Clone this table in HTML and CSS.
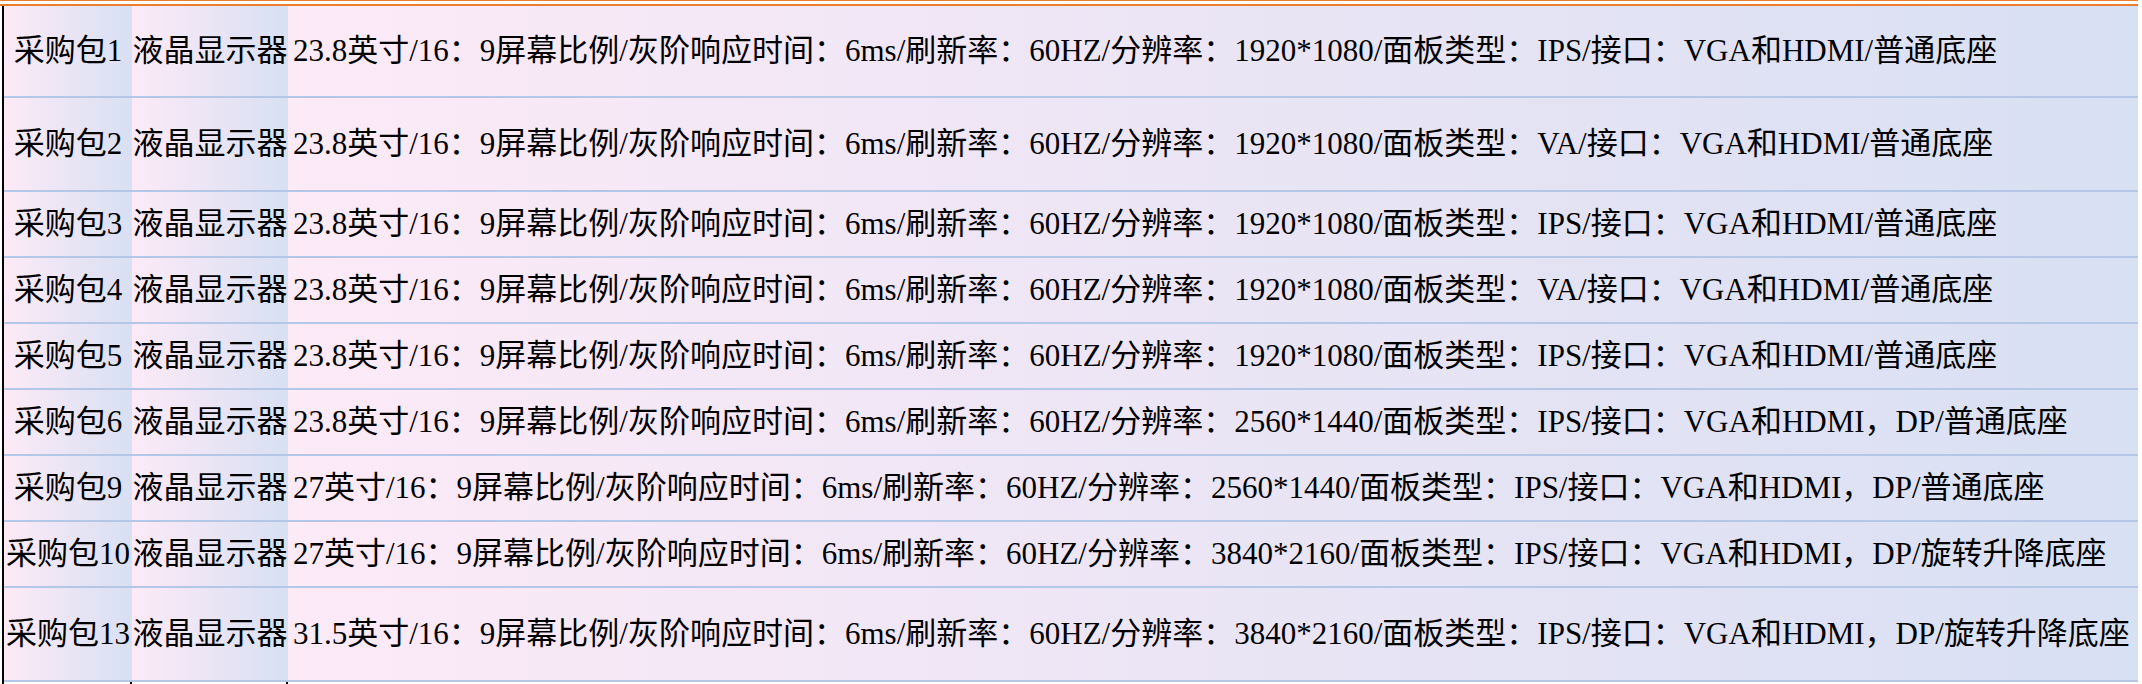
FILE: index.html
```html
<!DOCTYPE html>
<html lang="zh-CN">
<head>
<meta charset="utf-8">
<title>液晶显示器采购包</title>
<link rel="stylesheet" href="styles.css">
</head>
<body>
<div class="sheet">
  <div class="table">
    <div class="grid">
      <div class="row first">
        <div class="cell c-pkg">采购包1</div>
        <div class="cell c-name">液晶显示器</div>
        <div class="cell c-spec">23.8英寸/16：9屏幕比例/灰阶响应时间：6ms/刷新率：60HZ/分辨率：1920*1080/面板类型：IPS/接口：VGA和HDMI/普通底座</div>
      </div>
      <div class="row tall">
        <div class="cell c-pkg">采购包2</div>
        <div class="cell c-name">液晶显示器</div>
        <div class="cell c-spec">23.8英寸/16：9屏幕比例/灰阶响应时间：6ms/刷新率：60HZ/分辨率：1920*1080/面板类型：VA/接口：VGA和HDMI/普通底座</div>
      </div>
      <div class="row">
        <div class="cell c-pkg">采购包3</div>
        <div class="cell c-name">液晶显示器</div>
        <div class="cell c-spec">23.8英寸/16：9屏幕比例/灰阶响应时间：6ms/刷新率：60HZ/分辨率：1920*1080/面板类型：IPS/接口：VGA和HDMI/普通底座</div>
      </div>
      <div class="row">
        <div class="cell c-pkg">采购包4</div>
        <div class="cell c-name">液晶显示器</div>
        <div class="cell c-spec">23.8英寸/16：9屏幕比例/灰阶响应时间：6ms/刷新率：60HZ/分辨率：1920*1080/面板类型：VA/接口：VGA和HDMI/普通底座</div>
      </div>
      <div class="row">
        <div class="cell c-pkg">采购包5</div>
        <div class="cell c-name">液晶显示器</div>
        <div class="cell c-spec">23.8英寸/16：9屏幕比例/灰阶响应时间：6ms/刷新率：60HZ/分辨率：1920*1080/面板类型：IPS/接口：VGA和HDMI/普通底座</div>
      </div>
      <div class="row">
        <div class="cell c-pkg">采购包6</div>
        <div class="cell c-name">液晶显示器</div>
        <div class="cell c-spec">23.8英寸/16：9屏幕比例/灰阶响应时间：6ms/刷新率：60HZ/分辨率：2560*1440/面板类型：IPS/接口：VGA和HDMI，DP/普通底座</div>
      </div>
      <div class="row">
        <div class="cell c-pkg">采购包9</div>
        <div class="cell c-name">液晶显示器</div>
        <div class="cell c-spec">27英寸/16：9屏幕比例/灰阶响应时间：6ms/刷新率：60HZ/分辨率：2560*1440/面板类型：IPS/接口：VGA和HDMI，DP/普通底座</div>
      </div>
      <div class="row">
        <div class="cell c-pkg">采购包10</div>
        <div class="cell c-name">液晶显示器</div>
        <div class="cell c-spec">27英寸/16：9屏幕比例/灰阶响应时间：6ms/刷新率：60HZ/分辨率：3840*2160/面板类型：IPS/接口：VGA和HDMI，DP/旋转升降底座</div>
      </div>
      <div class="row tall">
        <div class="cell c-pkg">采购包13</div>
        <div class="cell c-name">液晶显示器</div>
        <div class="cell c-spec">31.5英寸/16：9屏幕比例/灰阶响应时间：6ms/刷新率：60HZ/分辨率：3840*2160/面板类型：IPS/接口：VGA和HDMI，DP/旋转升降底座</div>
      </div>
      <div class="tail">
        <div class="tail-cell"></div>
        <div class="tail-cell edge"></div>
        <div class="tail-cell edge"></div>
      </div>
    </div>
  </div>
</div>
</body>
</html>
```

FILE: styles.css
```css
html, body {
  margin: 0;
  padding: 0;
  background: #ffffff;
}

body {
  font-family: "Liberation Serif", "Noto Sans CJK SC", serif;
  font-size: 31px;
  color: #000000;
}

.sheet {
  width: 2138px;
  border-top: 1px solid #ed7d31;
  padding-top: 3px;
}

.table {
  border-top: 2px solid #ed7d31;
}

.grid {
  margin-left: 2px;
  border-left: 2px solid #000000;
}

.row {
  display: grid;
  grid-template-columns: 128px 156px 1850px;
  height: 64px;
  border-bottom: 2px solid #b4c7e7;
}

.row.first {
  height: 90px;
}

.row.tall {
  height: 92px;
}

.cell {
  display: flex;
  align-items: center;
  white-space: nowrap;
  overflow: visible;
  line-height: 1.2;
  background: linear-gradient(to right, #fdeaf7, #d8e0f3);
}

.c-pkg,
.c-name {
  justify-content: center;
}

.c-spec {
  padding-left: 5px;
}

.tail {
  display: grid;
  grid-template-columns: 128px 156px 1850px;
  height: 4px;
}

.tail-cell.edge {
  border-left: 2px solid #000000;
  margin-left: -2px;
}
```
